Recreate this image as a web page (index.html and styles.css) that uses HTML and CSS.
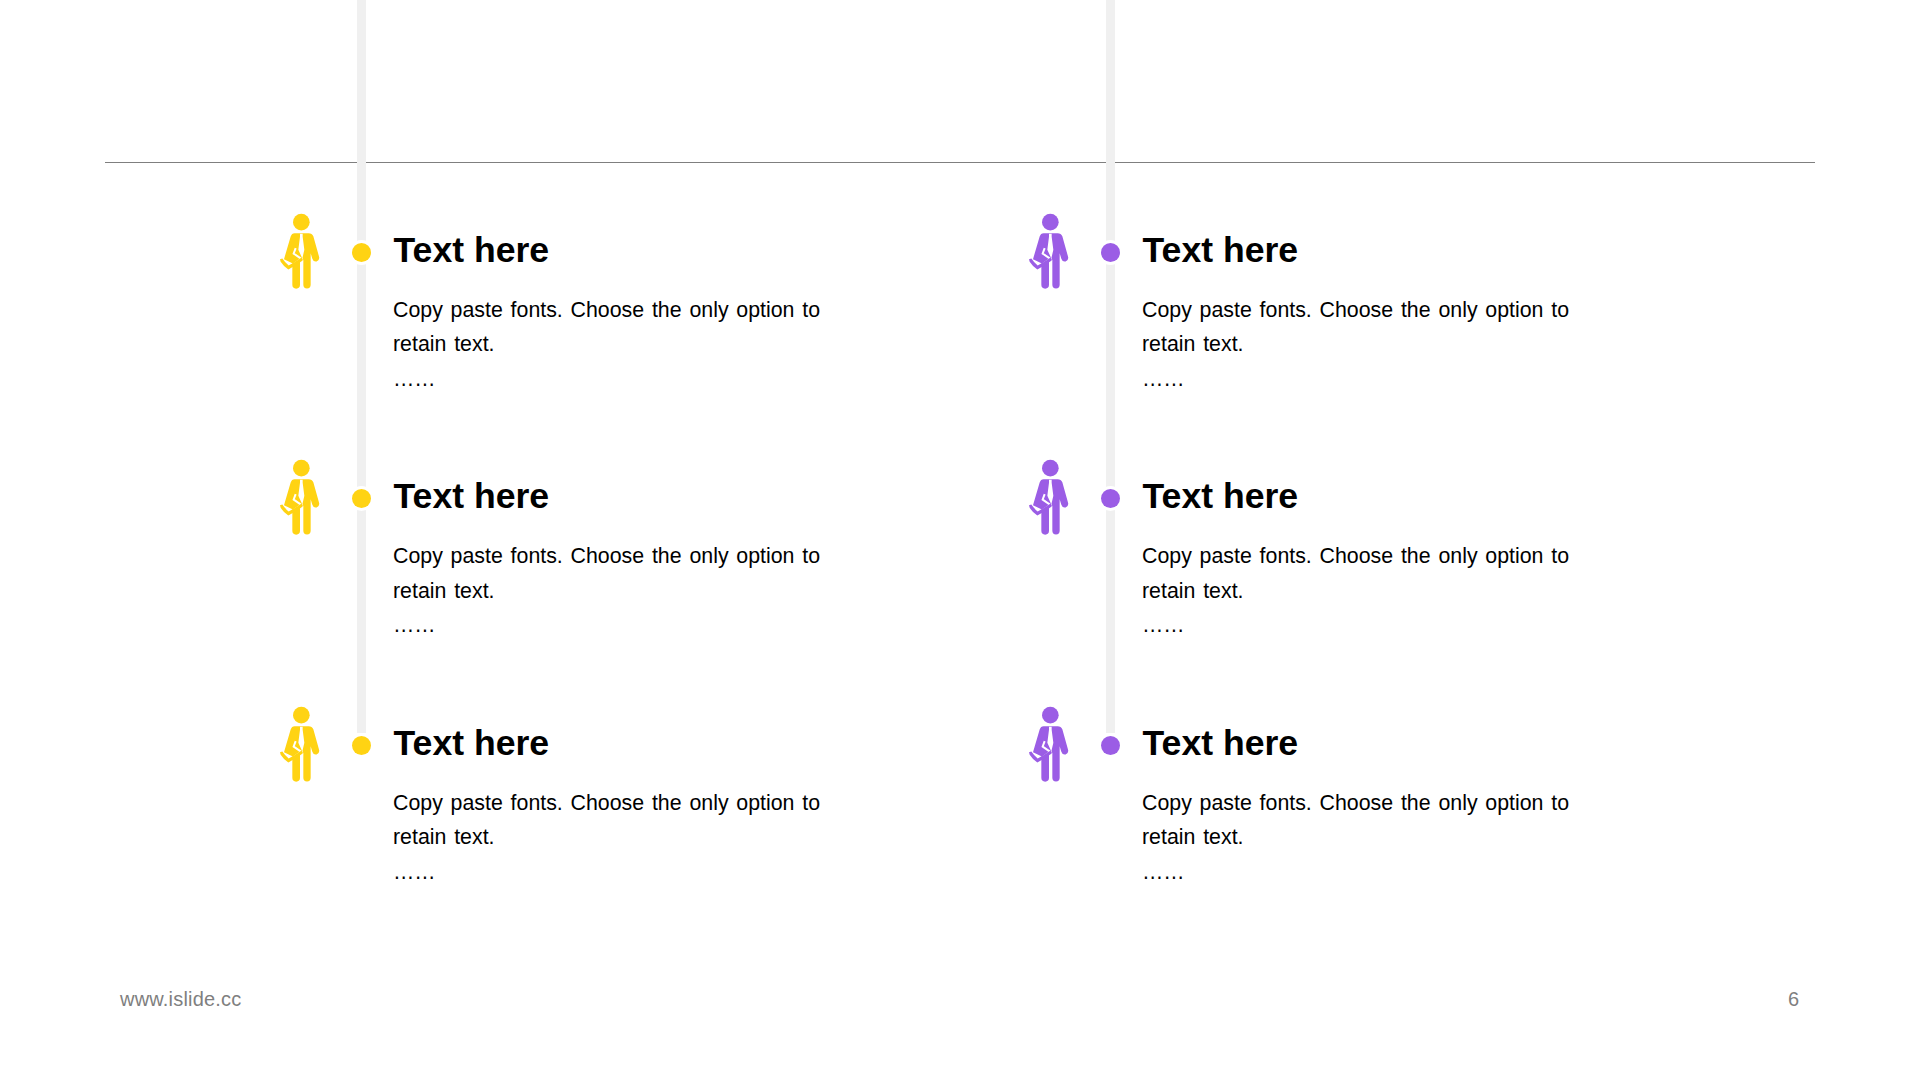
FILE: index.html
```html
<!DOCTYPE html>
<html lang="en">
<head>
<meta charset="utf-8">
<title>Slide 6</title>
<link rel="stylesheet" href="styles.css">
</head>
<body>
<svg class="defs" width="0" height="0" aria-hidden="true">
  <symbol id="person" viewBox="60 40 120 230">
    <circle cx="124" cy="67" r="25" fill="currentColor"/>
    <path d="M104 100H146Q156 100 160 109L177 170Q180 181 170 185Q160 187 157 177L152 160V255A11 11 0 0 1 130 255V180H120V255A11 11 0 0 1 97 255V190L72 178L92 110Q95 100 104 100Z" fill="currentColor"/>
    <path d="M120 102H128V111L133 150L127 176L115 150L120 111Z" fill="#fff"/>
    <path d="M107 145L101 161L124 177Q104 192 86 202Q74 192 64 179" fill="none" stroke="#fff" stroke-width="6"/>
    <path d="M60 178L67 176Q76 189 86 197Q106 186 125 173L128 182Q108 197 85 209Q70 199 62 186Z" fill="currentColor"/>
  </symbol>
</svg>
<main class="slide">
  <hr class="rule">
  <div class="columns">
    <section class="column yellow">
      <article class="row">
        <svg class="person"><use href="#person"/></svg><span class="dot"></span>
        <div class="copy"><h2>Text here</h2><p>Copy paste fonts. Choose the only option to retain text.<br>……</p></div>
      </article>
      <article class="row">
        <svg class="person"><use href="#person"/></svg><span class="dot"></span>
        <div class="copy"><h2>Text here</h2><p>Copy paste fonts. Choose the only option to retain text.<br>……</p></div>
      </article>
      <article class="row">
        <svg class="person"><use href="#person"/></svg><span class="dot"></span>
        <div class="copy"><h2>Text here</h2><p>Copy paste fonts. Choose the only option to retain text.<br>……</p></div>
      </article>
    </section>
    <section class="column purple">
      <article class="row">
        <svg class="person"><use href="#person"/></svg><span class="dot"></span>
        <div class="copy"><h2>Text here</h2><p>Copy paste fonts. Choose the only option to retain text.<br>……</p></div>
      </article>
      <article class="row">
        <svg class="person"><use href="#person"/></svg><span class="dot"></span>
        <div class="copy"><h2>Text here</h2><p>Copy paste fonts. Choose the only option to retain text.<br>……</p></div>
      </article>
      <article class="row">
        <svg class="person"><use href="#person"/></svg><span class="dot"></span>
        <div class="copy"><h2>Text here</h2><p>Copy paste fonts. Choose the only option to retain text.<br>……</p></div>
      </article>
    </section>
  </div>
  <footer class="footer"><span class="site">www.islide.cc</span><span>6</span></footer>
</main>
</body>
</html>
```

FILE: styles.css
```css
* { box-sizing: border-box; }
html, body { margin: 0; padding: 0; background: #fff; }
.defs { position: absolute; }
.slide {
  position: relative;
  width: 1920px;
  height: 1080px;
  padding-top: 162px;
  overflow: hidden;
  font-family: "Liberation Sans", Arial, sans-serif;
  color: #000;
}
.rule {
  width: 1710px;
  height: 1px;
  margin: 0 0 0 105px;
  border: 0;
  background: #7f7f7f;
}
.columns {
  display: flex;
  padding: 50px 0 0 280px;
}
.column {
  width: 749px;
}
.yellow { --accent: #ffd313; }
.purple { --accent: #9b5de5; }
.column::before {
  content: "";
  position: absolute;
  top: 0;
  height: 733px;
  width: 9px;
  margin-left: 77px;
  background: #f0f0f0;
}
.row {
  display: flex;
  align-items: flex-start;
  height: 246.4px;
  color: var(--accent);
}
.person {
  flex: none;
  width: 40px;
  height: 77px;
  color: var(--accent);
}
.dot {
  position: relative;
  flex: none;
  width: 19px;
  height: 19px;
  margin: 30px 0 0 32px;
  border-radius: 50%;
  background: var(--accent);
  box-shadow: 0 0 0 3px #fff;
}
.copy {
  width: 445px;
  margin: 17px 0 0 22px;
  color: #000;
}
.copy h2 {
  margin: 0 0 22px;
  padding-left: 0.5px;
  font-size: 35.6px;
  line-height: 41px;
  font-weight: 700;
}
.copy p {
  margin: 0;
  font-size: 21.33px;
  line-height: 34.4px;
  word-spacing: 1.9px;
}
.footer {
  position: absolute;
  left: 120px;
  right: 121px;
  top: 988px;
  display: flex;
  justify-content: space-between;
  font-size: 20px;
  line-height: 23px;
  color: #7f7f7f;
}
.site {
  letter-spacing: 0.2px;
}
```
